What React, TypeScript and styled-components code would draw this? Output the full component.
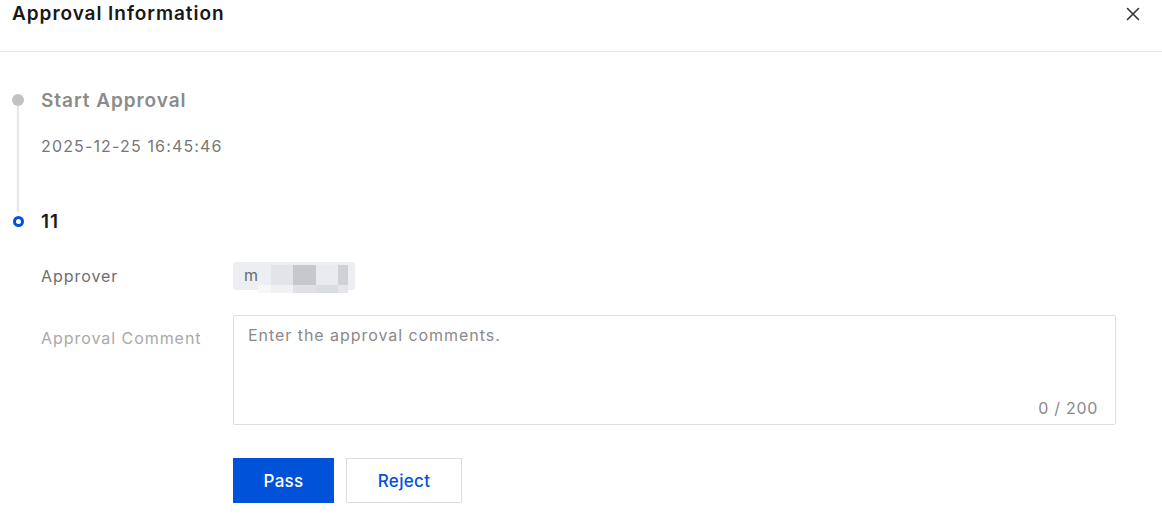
import React from "react";
import styled, { createGlobalStyle } from "styled-components";

const GlobalStyle = createGlobalStyle`
  html, body { margin: 0; padding: 0; background: #ffffff; }
  body { font-family: Inter, "Noto Sans", "Liberation Sans", sans-serif; -webkit-font-smoothing: antialiased; }
  * { box-sizing: border-box; }
`;

const Dialog = styled.div`
  width: 1162px;
  height: 514px;
  overflow: hidden;
  background: #fff;
  display: flex;
  flex-direction: column;
`;

const Header = styled.div`
  height: 52px;
  flex: none;
  display: flex;
  align-items: flex-start;
  justify-content: space-between;
  padding: 0 20px 0 12px;
  border-bottom: 1px solid #e7e7e7;
`;

const Title = styled.h2`
  margin: 0;
  font-size: 19px;
  line-height: 28px;
  font-weight: 600;
  letter-spacing: 0.95px;
  color: #181818;
`;

const CloseButton = styled.button`
  border: 0;
  background: transparent;
  padding: 0;
  margin-top: 5px;
  width: 18px;
  height: 18px;
  display: flex;
  align-items: center;
  justify-content: center;
  color: #333;
  cursor: pointer;
`;

const Body = styled.div`
  padding: 36px 46px 0 0;
  display: flex;
  flex-direction: column;
`;

const Item = styled.div`
  display: flex;
`;

const Rail = styled.div<{ $top: number }>`
  width: 12px;
  margin-left: 12px;
  flex: none;
  display: flex;
  flex-direction: column;
  align-items: center;
  padding-top: ${(p) => p.$top}px;
`;

const Dot = styled.div<{ $active?: boolean }>`
  flex: none;
  border-radius: 50%;
  ${(p) =>
    p.$active
      ? `width: 11px; height: 11px; border: 3px solid #0052d9; background: #fff;`
      : `width: 12px; height: 12px; background: #c2c2c2;`}
`;

const Line = styled.div`
  flex: 1;
  width: 2px;
  margin-bottom: -3px;
  background: #e3e5e9;
`;

const Content = styled.div<{ $pad: number }>`
  margin-left: 17px;
  flex: 1;
  display: flex;
  flex-direction: column;
  padding-bottom: ${(p) => p.$pad}px;
`;

const StepTitle = styled.div<{ $muted?: boolean }>`
  font-size: 19px;
  line-height: 26px;
  font-weight: 600;
  letter-spacing: 0.95px;
  color: ${(p) => (p.$muted ? "#8b8b8b" : "#1a1a1a")};
`;

const StepTime = styled.div`
  margin-top: 20px;
  font-size: 16px;
  line-height: 24px;
  letter-spacing: 1.15px;
  color: #777;
`;

const FormRow = styled.div<{ $top: number }>`
  display: flex;
  margin-top: ${(p) => p.$top}px;
`;

const Label = styled.div<{ $light?: boolean; $pt: number }>`
  width: 192px;
  flex: none;
  padding-top: ${(p) => p.$pt}px;
  font-size: 16px;
  line-height: 24px;
  letter-spacing: 0.95px;
  color: ${(p) => (p.$light ? "#a9a9a9" : "#6e6e6e")};
`;

const Tag = styled.div`
  height: 28px;
  display: inline-flex;
  align-items: flex-start;
  padding: 0 7px 0 11px;
  background: #eceef2;
  border-radius: 3px;
  font-size: 16px;
  line-height: 28px;
  color: #6a6a6a;
`;

const TagText = styled.span`
  line-height: 26px;
`;

const Mosaic = styled.div`
  margin-top: 3px;
  display: grid;
  grid-template-columns: 13px 22px 23px 22px 10px;
  grid-template-rows: 20px 8px;
`;

const Cell = styled.div<{ $c: string }>`
  background: ${(p) => p.$c};
`;

const TextAreaWrap = styled.div`
  position: relative;
  flex: 1;
  height: 110px;
  border: 1px solid #dcdee3;
  border-radius: 2px;
`;

const TextArea = styled.textarea`
  width: 100%;
  height: 100%;
  border: 0;
  outline: none;
  resize: none;
  padding: 7px 14px;
  font-family: inherit;
  font-size: 16px;
  line-height: 24px;
  letter-spacing: 0.95px;
  color: #222;
  background: transparent;
  &::placeholder { color: #8a8a8a; }
`;

const Counter = styled.span`
  position: absolute;
  right: 17px;
  bottom: 4px;
  font-size: 16px;
  line-height: 24px;
  letter-spacing: 0.7px;
  color: #8a8a8a;
`;

const Actions = styled.div`
  display: flex;
  gap: 12px;
  margin-top: 33px;
  margin-left: 192px;
`;

const Button = styled.button<{ $primary?: boolean }>`
  height: 45px;
  padding: 0;
  width: ${(p) => (p.$primary ? 101 : 116)}px;
  font-family: inherit;
  font-size: 17px;
  font-weight: 500;
  letter-spacing: 0.3px;
  border-radius: 0;
  cursor: pointer;
  border: 1px solid ${(p) => (p.$primary ? "#0052d9" : "#dcdee3")};
  background: ${(p) => (p.$primary ? "#0052d9" : "#fff")};
  color: ${(p) => (p.$primary ? "#fff" : "#0052d9")};
`;

const top = ["#eceef2", "#e2e4e8", "#c6c8cd", "#e9ebef", "#cfd1d6"];
const bottom = ["#f6f7f9", "#f0f1f3", "#dfe1e5", "#d9dce0", "#e4e6ea"];

export default function App() {
  return (
    <>
      <GlobalStyle />
      <Dialog>
        <Header>
          <Title>Approval Information</Title>
          <CloseButton aria-label="Close">
            <svg width="16" height="16" viewBox="0 0 16 16" fill="none">
              <path d="M2.5 2.5L13.5 13.5M13.5 2.5L2.5 13.5" stroke="#333" strokeWidth="1.6" strokeLinecap="round" />
            </svg>
          </CloseButton>
        </Header>
        <Body>
          <Item>
            <Rail $top={6}>
              <Dot />
              <Line />
            </Rail>
            <Content $pad={51}>
              <StepTitle $muted>Start Approval</StepTitle>
              <StepTime>2025-12-25 16:45:46</StepTime>
            </Content>
          </Item>
          <Item>
            <Rail $top={7}>
              <Dot $active />
            </Rail>
            <Content $pad={0}>
              <StepTitle>11</StepTitle>
              <FormRow $top={27}>
                <Label $pt={2}>Approver</Label>
                <Tag>
                  <TagText>m</TagText>
                  <Mosaic>
                    {top.map((c, i) => (
                      <Cell key={"t" + i} $c={c} />
                    ))}
                    {bottom.map((c, i) => (
                      <Cell key={"b" + i} $c={c} />
                    ))}
                  </Mosaic>
                </Tag>
              </FormRow>
              <FormRow $top={25}>
                <Label $light $pt={11}>Approval Comment</Label>
                <TextAreaWrap>
                  <TextArea placeholder="Enter the approval comments." maxLength={200} />
                  <Counter>0 / 200</Counter>
                </TextAreaWrap>
              </FormRow>
              <Actions>
                <Button $primary>Pass</Button>
                <Button>Reject</Button>
              </Actions>
            </Content>
          </Item>
        </Body>
      </Dialog>
    </>
  );
}
